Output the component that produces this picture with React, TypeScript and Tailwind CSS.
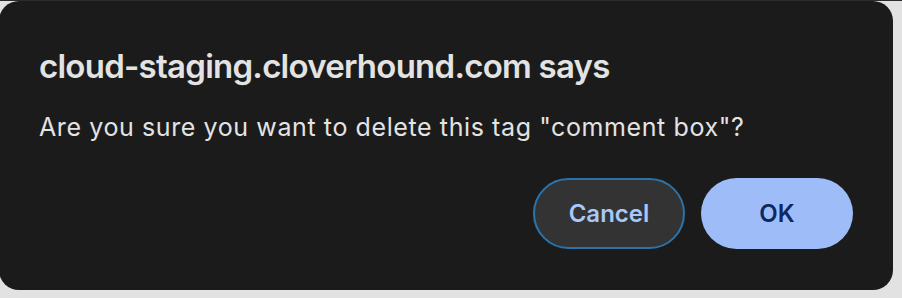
import React from 'react';

const App = () => {
  return (
    <div className="w-[902px] h-[298px] bg-[#e2e2e2] overflow-hidden" style={{ fontFamily: 'Inter, "Liberation Sans", sans-serif' }}>
      <div className="h-[1px] bg-[#2b2b2b]" />
      <div className="w-[894px] h-[289px] -ml-[1px] bg-[#1b1b1b] rounded-[20px] flex flex-col pl-[40px] pr-[40px]">
        <h1 className="mt-[45px] text-[33px] leading-[40px] tracking-[-0.75px] font-semibold text-[#e3e3e3] whitespace-nowrap">
          cloud-staging.cloverhound.com says
        </h1>
        <p className="mt-[26px] text-[25px] leading-[30px] tracking-[0.6px] text-[#e3e3e3] whitespace-nowrap">
          Are you sure you want to delete this tag "comment box"?
        </p>
        <div className="mt-[36px] flex justify-end gap-[16px]">
          <button className="w-[152px] h-[71px] rounded-full bg-[#333333] border-2 border-[#2a74ab] text-[#a8c7fa] text-[24px] font-semibold">
            Cancel
          </button>
          <button className="w-[152px] h-[71px] rounded-full bg-[#9ebdf8] text-[#0b2a63] text-[24px] font-semibold">
            OK
          </button>
        </div>
      </div>
    </div>
  );
};

export default App;
